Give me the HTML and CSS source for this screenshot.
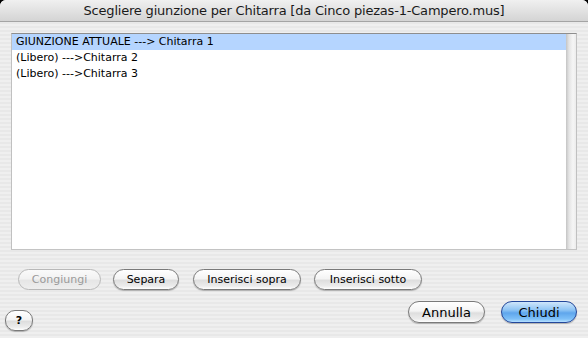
FILE: index.html
```html
<!DOCTYPE html>
<html lang="it">
<head>
    <meta charset="UTF-8">
    <title>Scegliere giunzione</title>
    <link rel="stylesheet" href="styles.css">
</head>
<body>
    <div class="window">
        <div class="titlebar">Scegliere giunzione per Chitarra [da Cinco piezas-1-Campero.mus]</div>
        <div class="content">
            <div class="list">
                <div class="rows">
                    <div class="row selected">GIUNZIONE ATTUALE ---&gt; Chitarra 1</div>
                    <div class="row">(Libero) ---&gt;Chitarra 2</div>
                    <div class="row">(Libero) ---&gt;Chitarra 3</div>
                </div>
                <div class="scrollbar"></div>
            </div>

            <div class="actions">
                <button class="btn small disabled">Congiungi</button>
                <button class="btn small w-separa">Separa</button>
                <button class="btn small w-wide">Inserisci sopra</button>
                <button class="btn small w-wide">Inserisci sotto</button>
            </div>

            <div class="footer">
                <button class="btn help">?</button>
                <div class="footer-right">
                    <button class="btn large">Annulla</button>
                    <button class="btn large default">Chiudi</button>
                </div>
            </div>
        </div>
    </div>
</body>
</html>
```

FILE: styles.css
```css
* {
    margin: 0;
    padding: 0;
    box-sizing: border-box;
}

body {
    background: #000;
    font-family: 'DejaVu Sans', 'Liberation Sans', sans-serif;
    width: 588px;
    height: 338px;
    overflow: hidden;
}

.window {
    width: 588px;
    height: 338px;
    border-radius: 6px 6px 0 0;
    overflow: hidden;
    background: repeating-linear-gradient(180deg, #efefef 0 2px, #e8e8e8 2px 4px);
    display: flex;
    flex-direction: column;
}

.titlebar {
    height: 22px;
    flex: none;
    background: linear-gradient(180deg, #f0f0f0 0%, #e2e2e2 50%, #d4d4d4 100%);
    border-bottom: 1px solid #a4a4a4;
    text-align: center;
    font-size: 13px;
    line-height: 21px;
    color: #1a1a1a;
    letter-spacing: -0.2px;
}

.content {
    flex: 1;
    display: flex;
    flex-direction: column;
    padding: 11px 11px 7px 5px;
}

/* list box */
.list {
    margin-left: 6px;
    height: 217px;
    display: flex;
    background: #fff;
    border-top: 1px solid #8e8e8e;
    border-left: 1px solid #c0c0c0;
    border-right: 1px solid #c0c0c0;
    border-bottom: 1px solid #c4c4c4;
}

.rows {
    flex: 1;
}

.row {
    height: 16px;
    line-height: 16px;
    font-size: 11px;
    padding-left: 4px;
    color: #000;
    white-space: nowrap;
}

.row.selected {
    background: #b5d5ff;
}

.scrollbar {
    width: 10px;
    background: linear-gradient(90deg, #c4c4c4 0%, #e4e4e4 30%, #f6f6f6 70%, #ececec 100%);
}

/* buttons */
.btn {
    font-family: inherit;
    color: #000;
    border: 1px solid #7a7a7a;
    border-radius: 11px;
    background: linear-gradient(180deg, #ffffff 0%, #f4f4f4 45%, #dedede 55%, #ececec 85%, #ffffff 100%);
    box-shadow: 0 1px 1px rgba(0, 0, 0, 0.25);
    cursor: pointer;
}

.actions {
    display: flex;
    gap: 12px;
    margin: 19px 0 0 13px;
}

.btn.small {
    height: 21px;
    font-size: 11px;
    width: 83px;
}

.btn.w-separa {
    width: 66px;
    margin-left: 0;
}

.btn.w-wide {
    width: 108px;
    margin-left: 2px;
}

.btn.w-wide + .btn.w-wide {
    margin-left: 1px;
}

.btn.disabled {
    color: #9a9a9a;
    border-color: #b8b8b8;
    box-shadow: none;
    background: linear-gradient(180deg, #fafafa 0%, #f2f2f2 45%, #e6e6e6 55%, #eeeeee 100%);
}

.footer {
    flex: 1;
    display: flex;
    justify-content: space-between;
    align-items: flex-end;
}

.footer-right {
    display: flex;
    gap: 16px;
    align-self: flex-start;
    margin-top: 11px;
}

.btn.large {
    height: 22px;
    width: 77px;
    font-size: 13px;
}

.btn.default {
    width: 76px;
    border-color: #23479a;
    background: linear-gradient(180deg, #cfe6fb 0%, #8ec4f4 40%, #5fa6ec 55%, #7ec0f8 85%, #b6e0ff 100%);
}

.btn.help {
    width: 28px;
    height: 21px;
    font-size: 11px;
    font-weight: bold;
    border-radius: 10px;
}
```
